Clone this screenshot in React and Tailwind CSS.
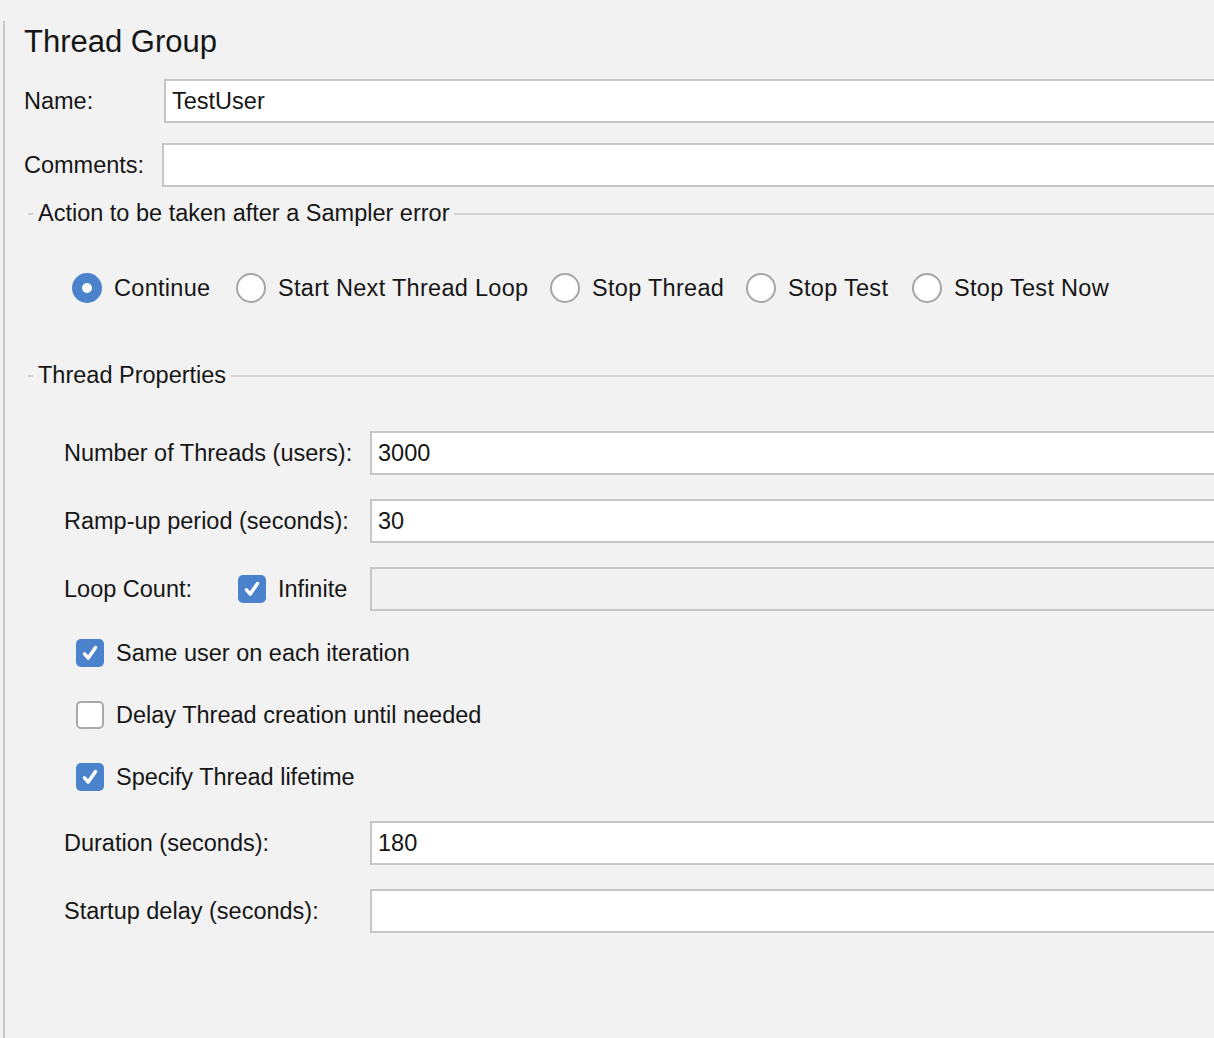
import React from "react";

const FONT = { fontFamily: '"Liberation Sans", Arial, sans-serif' };

function Check({ on }) {
  return (
    <span
      className={
        "flex items-center justify-center w-[28px] h-[28px] rounded-[5px] shrink-0 " +
        (on ? "bg-[#4b82cc]" : "bg-white border-2 border-[#a9a9a9]")
      }
    >
      {on && (
        <svg width="22" height="22" viewBox="0 0 20 20">
          <path d="M5 10.8 L8.4 14.6 L15 5" fill="none" stroke="white" strokeWidth="3.2" strokeLinecap="round" strokeLinejoin="round" />
        </svg>
      )}
    </span>
  );
}

function Radio({ on, label, w }) {
  return (
    <div className="flex items-center gap-[12px] shrink-0">
      {on ? (
        <span className="flex items-center justify-center w-[30px] h-[30px] rounded-full bg-[#4b82cc] shrink-0">
          <span className="w-[10px] h-[10px] rounded-full bg-white" />
        </span>
      ) : (
        <span className="w-[30px] h-[30px] rounded-full bg-white border-2 border-[#a5a5a5] shrink-0" />
      )}
      <span className={w + " shrink-0 whitespace-nowrap tracking-[0.3px] pt-[2px]"}>{label}</span>
    </div>
  );
}

function Legend({ title }) {
  return (
    <div className="flex items-center h-[24px] pl-[23px]">
      <span className="w-[5px] h-[2px] bg-[#d2d2d2]" />
      <span className="px-[5px] whitespace-nowrap">{title}</span>
      <span className="flex-1 h-[2px] bg-[#d2d2d2]" />
    </div>
  );
}

function Field({ value, disabled }) {
  return (
    <div
      className={
        "flex-1 h-[44px] border-2 border-[#c6c6c6] flex items-center px-[6px] pt-[2px] " +
        (disabled ? "bg-[#f1f1f1]" : "bg-white")
      }
    >
      {value}
    </div>
  );
}

export default function App() {
  return (
    <div className="w-[1214px] h-[1038px] overflow-hidden bg-[#f2f2f2] text-[#161616]" style={FONT}>
      <div className="ml-[3px] h-full border-l-2 border-[#c9c9c9] w-[1240px] text-[23.5px]">
        <div className="flex items-center h-[42px] mt-[21px] pl-[19px] text-[31px]">Thread Group</div>

        <div className="flex items-center mt-[16px] pl-[19px]">
          <span className="w-[140px] pt-[2px]">Name:</span>
          <Field value="TestUser" />
        </div>
        <div className="flex items-center mt-[20px] pl-[19px]">
          <span className="w-[138px] pt-[2px]">Comments:</span>
          <Field value="" />
        </div>

        <div className="mt-[15px]">
          <Legend title="Action to be taken after a Sampler error" />
        </div>
        <div className="flex items-center h-[32px] mt-[46px] pl-[67px] gap-[22px]">
          <Radio on label="Continue" w="w-[100px]" />
          <Radio label="Start Next Thread Loop" w="w-[250px]" />
          <Radio label="Stop Thread" w="w-[132px]" />
          <Radio label="Stop Test" w="w-[102px]" />
          <Radio label="Stop Test Now" w="w-[158px]" />
        </div>

        <div className="mt-[60px]">
          <Legend title="Thread Properties" />
        </div>

        <div className="flex items-center mt-[43px] pl-[59px]">
          <span className="w-[306px] pt-[2px]">Number of Threads (users):</span>
          <Field value="3000" />
        </div>
        <div className="flex items-center mt-[24px] pl-[59px]">
          <span className="w-[306px] pt-[2px]">Ramp-up period (seconds):</span>
          <Field value="30" />
        </div>
        <div className="flex items-center mt-[24px] pl-[59px]">
          <span className="w-[174px] pt-[2px]">Loop Count:</span>
          <Check on />
          <span className="ml-[12px] w-[92px] pt-[2px]">Infinite</span>
          <Field value="" disabled />
        </div>

        <div className="flex items-center h-[28px] mt-[28px] pl-[71px] gap-[12px]">
          <Check on />
          <span className="pt-[2px]">Same user on each iteration</span>
        </div>
        <div className="flex items-center h-[28px] mt-[34px] pl-[71px] gap-[12px]">
          <Check />
          <span className="pt-[2px]">Delay Thread creation until needed</span>
        </div>
        <div className="flex items-center h-[28px] mt-[34px] pl-[71px] gap-[12px]">
          <Check on />
          <span className="pt-[2px]">Specify Thread lifetime</span>
        </div>

        <div className="flex items-center mt-[30px] pl-[59px]">
          <span className="w-[306px] pt-[2px]">Duration (seconds):</span>
          <Field value="180" />
        </div>
        <div className="flex items-center mt-[24px] pl-[59px]">
          <span className="w-[306px] pt-[2px]">Startup delay (seconds):</span>
          <Field value="" />
        </div>
      </div>
    </div>
  );
}
